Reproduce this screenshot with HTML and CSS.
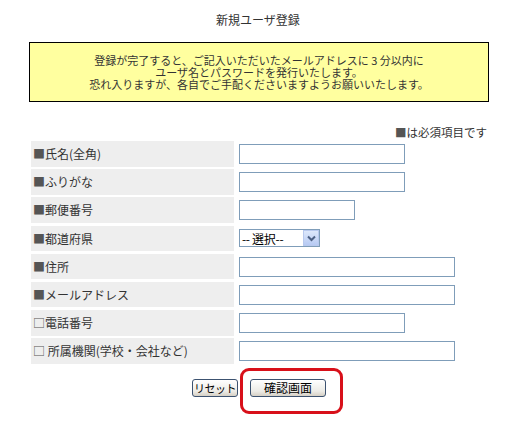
FILE: index.html
```html
<!DOCTYPE html>
<html lang="ja">
<head>
<meta charset="utf-8">
<link rel="stylesheet" href="styles.css">
</head>
<body>
<div class="page">
  <h1 class="title">新規ユーザ登録</h1>
  <div class="notice">
    <p>登録が完了すると、ご記入いただいたメールアドレスに 3 分以内に</p>
    <p>ユーザ名とパスワードを発行いたします。</p>
    <p>恐れ入りますが、各自でご手配くださいますようお願いいたします。</p>
  </div>
  <p class="required"><span class="sq">■</span>は必須項目です</p>
  <div class="form">
    <div class="label"><span class="sq">■</span>氏名(全角)</div>
    <div class="field"><span class="input w166"></span></div>
    <div class="label"><span class="sq">■</span>ふりがな</div>
    <div class="field"><span class="input w166"></span></div>
    <div class="label"><span class="sq">■</span>郵便番号</div>
    <div class="field"><span class="input w116"></span></div>
    <div class="label"><span class="sq">■</span>都道府県</div>
    <div class="field">
      <span class="select"><span class="opt">-- 選択--</span><span class="arrow"><svg width="9" height="7" viewBox="0 0 9 7"><path d="M1 1.5 L4.5 5 L8 1.5" fill="none" stroke="#4d6185" stroke-width="2"/></svg></span></span>
    </div>
    <div class="label"><span class="sq">■</span>住所</div>
    <div class="field"><span class="input w216"></span></div>
    <div class="label"><span class="sq">■</span>メールアドレス</div>
    <div class="field"><span class="input w216"></span></div>
    <div class="label"><span class="sq">□</span>電話番号</div>
    <div class="field"><span class="input w166"></span></div>
    <div class="label"><span class="sq">□</span>&nbsp;所属機関(学校・会社など)</div>
    <div class="field"><span class="input w216"></span></div>
  </div>
  <div class="buttons">
    <span class="btn reset">リセット</span>
    <span class="confirm-wrap"><span class="btn confirm">確認画面</span></span>
  </div>
</div>
</body>
</html>
```

FILE: styles.css
```css
html, body {
  margin: 0;
  padding: 0;
  background: #ffffff;
}
body {
  font-family: "Noto Sans CJK JP", "Noto Sans", sans-serif;
  font-size: 12px;
  color: #333333;
  width: 512px;
  height: 440px;
  overflow: hidden;
}
.page {
  padding-top: 14px;
}
.title {
  margin: 0;
  font-size: 12px;
  font-weight: normal;
  line-height: 12px;
  text-align: center;
  padding-left: 4px;
}
.notice {
  box-sizing: border-box;
  margin: 16px 0 0 29px;
  width: 460px;
  height: 60px;
  background: #ffff9f;
  border: 1px solid #000000;
  text-align: center;
  padding-top: 11px;
}
.notice p {
  margin: 0;
  line-height: 12px;
  font-size: 11px;
}
.required {
  margin: 24px 0 0 0;
  width: 487px;
  text-align: right;
  line-height: 12px;
  font-size: 11.5px;
}
.sq {
  color: #555555;
}
.form {
  display: grid;
  grid-template-columns: 203px 253px;
  row-gap: 2.7px;
  margin: 3px 0 0 31px;
}
.label {
  background: #eeeeee;
  height: 25.5px;
  line-height: 25.5px;
  padding-left: 2px;
  font-size: 12px;
  color: #333333;
  white-space: nowrap;
}
.field {
  display: flex;
  align-items: center;
  padding-left: 5px;
}
.input {
  box-sizing: border-box;
  display: block;
  height: 20px;
  border: 1px solid #7f9db9;
  background: #ffffff;
}
.w166 { width: 166px; }
.w116 { width: 116px; }
.w216 { width: 216px; }
.select {
  box-sizing: border-box;
  display: flex;
  align-items: center;
  justify-content: space-between;
  width: 81px;
  height: 18px;
  border: 1px solid #7f9db9;
  padding-left: 2px;
  font-size: 12px;
  color: #000000;
}
.opt {
  white-space: pre;
  letter-spacing: -0.3px;
}
.arrow {
  box-sizing: border-box;
  width: 16px;
  height: 16px;
  background: linear-gradient(#dde8fb, #b7caf3);
  border: 1px solid #b8c9ee;
  display: flex;
  align-items: center;
  justify-content: center;
}
.buttons {
  display: flex;
  justify-content: center;
  gap: 12px;
  margin-top: 15px;
  padding-left: 6px;
}
.btn {
  box-sizing: border-box;
  display: flex;
  align-items: center;
  justify-content: center;
  height: 18px;
  border: 1px solid #3c5270;
  border-radius: 3px;
  background: linear-gradient(#ffffff, #ecebe6 70%, #d6d0c5);
  color: #000000;
  font-size: 12px;
  white-space: nowrap;
}
.reset {
  width: 46px;
  font-size: 11px;
  letter-spacing: -0.5px;
}
.confirm { width: 76px; }
.confirm-wrap {
  position: relative;
}
.confirm-wrap::after {
  content: "";
  position: absolute;
  left: -10px;
  top: -11px;
  width: 103px;
  height: 46px;
  box-sizing: border-box;
  border: 3px solid #d8101a;
  border-radius: 9px;
}
```
